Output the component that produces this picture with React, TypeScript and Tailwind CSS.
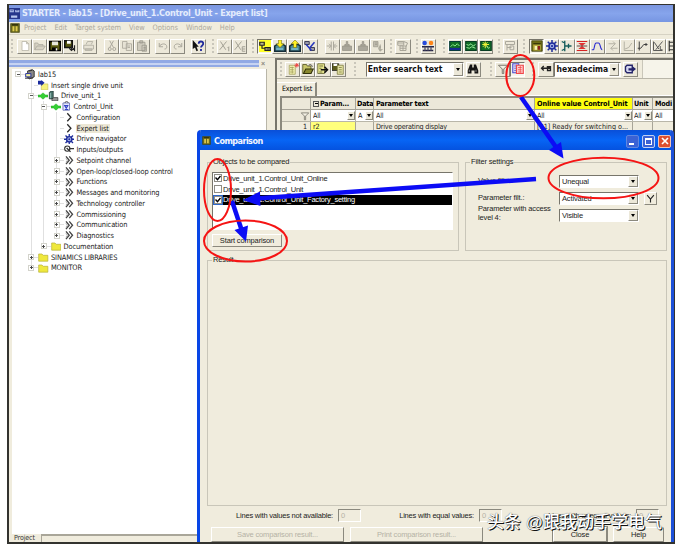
import type { ReactNode } from "react";
import clsx from "clsx";

const tahoma = "font-['DejaVu_Sans_Condensed','DejaVu_Sans',sans-serif]";
const sans = "font-['Liberation_Sans',Arial,sans-serif]";

const glyphs: Record<string, ReactNode> = {
  new: <path d="M4 2h6l3 3v9H4zM10 2v3h3" fill="#fff" stroke="#b4b1a4" />,
  open: <path d="M1 13V4h4l1 2h6v2M1 13l3-5h11l-3 5z" fill="#d5d1c2" stroke="#aaa79b" />,
  save: (
    <>
      <path d="M1 2h14v12H1z" fill="#5b5c12" stroke="#000" strokeWidth="2" />
      <path d="M4 2h8v5H4z" fill="#e8e8da" />
      <path d="M4 10h7v4H4z" fill="#000" />
      <path d="M9 11h2v3H9z" fill="#fff" />
    </>
  ),
  saveCompile: (
    <>
      <path d="M1 1h10v9H1z" fill="#55560f" stroke="#111" strokeWidth="2" />
      <path d="M4 1h5v4H4z" fill="#fff" />
      <path d="M10 7v7M7 11l3 3 3-3M14 7v8" fill="none" stroke="#222" strokeWidth="1.6" />
    </>
  ),
  print: <path d="M4 6l2-4h7l-2 4M1 7h13v5H1zM3 12h9v2H3z" fill="#e6e2d4" stroke="#aaa79b" />,
  cut: <path d="M5 1l5 9M10 1L5 10M3 12a2 2 0 1 0 4 0 2 2 0 1 0-4 0M9 12a2 2 0 1 0 4 0 2 2 0 1 0-4 0" fill="none" stroke="#aaa79b" strokeWidth="1.3" />,
  copy: <path d="M2 2h6v9H2zM7 5h7v9H7zM9 8h3M9 10h3" fill="#e6e2d4" stroke="#a5a296" />,
  paste: <path d="M2 3h10v11H2zM5 1h4v3H5zM8 7h6v8H8zM10 10h3M10 12h3" fill="#cfcbbd" stroke="#9a978b" />,
  undo: <path d="M3 4v5h5M3 9c2-5 10-5 10 0 0 2-1 3-3 3" fill="none" stroke="#aaa79b" strokeWidth="1.3" />,
  redo: <path d="M13 4v5H8M13 9C11 4 3 4 3 9c0 2 1 3 3 3" fill="none" stroke="#aaa79b" strokeWidth="1.3" />,
  help: (
    <>
      <path d="M1 0l8 9H6l2 5-2 1-2-5-3 2z" fill="#111" />
      <path d="M9 5c0-4 6-4 6 0 0 2-3 3-3 5M12 12v2.500" fill="none" stroke="#202a9c" strokeWidth="2.4" />
    </>
  ),
  x1: <path d="M2 2l7 11M10 2L1 13M13 9v6M11.500 10.500l1.500-1.500" fill="none" stroke="#a19e92" strokeWidth="1.3" />,
  x2: <path d="M2 2l7 11M10 2L1 13M11 9h4M11 12h4M11 15h4M11 9v6" fill="none" stroke="#a19e92" strokeWidth="1.3" />,
  connect: (
    <>
      <path d="M0 0h16v16H0z" fill="#ffff28" />
      <path d="M1 3h6v4H1zM8 10h7v4H8z" fill="#bdb98a" stroke="#222" strokeWidth="1.6" />
      <path d="M4 7v4h4M10 12h4" fill="none" stroke="#222" strokeWidth="1.6" />
    </>
  ),
  download: (
    <>
      <path d="M1 8l3-2h8l3 2v7H1z" fill="#4e8a98" stroke="#142b36" strokeWidth="2" />
      <path d="M6 0h4v5h3l-5 5-5-5h3z" fill="#fff022" stroke="#69680a" strokeWidth=".7" />
      <path d="M3 12h9" stroke="#8fd3e2" strokeWidth="1.5" />
    </>
  ),
  upload: (
    <>
      <path d="M1 8l3-2h8l3 2v7H1z" fill="#4e8a98" stroke="#142b36" strokeWidth="2" />
      <path d="M6 10h4V5h3L8 0 3 5h3z" fill="#fff022" stroke="#69680a" strokeWidth=".7" />
      <path d="M3 12h9" stroke="#8fd3e2" strokeWidth="1.5" />
    </>
  ),
  percent: (
    <>
      <path d="M1 2h6v4H1zM8 10h6v4H8z" fill="#9a9aa8" stroke="#3d3d55" strokeWidth="1.3" />
      <path d="M3 6l7 8M14 3L8 10" stroke="#2434bd" strokeWidth="2" />
    </>
  ),
  split: <path d="M7 2v12M10 2v12M1 8h5M11 8h4M4 5l3 3-3 3M13 5l-3 3 3 3" fill="none" stroke="#aaa79b" strokeWidth="1.3" />,
  grayBox: <path d="M2 8h12v6H2zM5 8V6h2V2h2v4h2v2" fill="#aaa79b" stroke="#969387" />,
  grayMove: <path d="M2 2h6v7H2zM4 4h3M4 6h3M8 11h3V6M11 8v6M9 12l2 3 3-3" fill="#bebaac" stroke="#9e9b8f" />,
  table: <path d="M1 2h8v5H1zM4 8h8v6H4zM9 2l5 2-2 5M1 4h8M4 11h8M8 8v6" fill="none" stroke="#a7a497" strokeWidth="1.3" />,
  dots: (
    <>
      <circle cx="3.500" cy="4" r="3" fill="#274bdc" />
      <circle cx="12" cy="4" r="3" fill="#ff8518" />
      <path d="M0 9h16M1 14h14" stroke="#252547" strokeWidth="1.8" />
      <path d="M4 9v5M8 9v5M12 9v5" stroke="#55556b" strokeWidth="1.8" />
    </>
  ),
  trace: (
    <>
      <path d="M1 2h14v12H1z" fill="#117024" stroke="#073d35" strokeWidth="1.6" />
      <path d="M2 9l3-3 3 2 3-3 3 3" fill="none" stroke="#8be88b" strokeWidth="1.3" />
      <path d="M1 12h14" stroke="#162a90" strokeWidth="3" />
    </>
  ),
  trace2: (
    <>
      <path d="M1 2h14v12H1z" fill="#106c25" stroke="#073d22" strokeWidth="1.6" />
      <path d="M2 6l3 1 3-2 3 3 3-2M2 10l4 1 3-2 5 2" fill="none" stroke="#9cec9c" strokeWidth="1.3" />
    </>
  ),
  trace3: (
    <>
      <path d="M1 2h14v12H1z" fill="#117024" stroke="#073d22" strokeWidth="1.6" />
      <path d="M9 8l2 3 2-1" fill="none" stroke="#9cec9c" strokeWidth="1.3" />
      <path d="M7 2v9M3 6h9M4 3l6 6M10 3L4 9" stroke="#f2f23b" strokeWidth="1.3" />
    </>
  ),
  pci: <path d="M2 2h12v4H2zM4 6v8M4 10h6M8 8h5v5H8z" fill="none" stroke="#aaa79b" strokeWidth="1.3" />,
  lock: (
    <>
      <path d="M1 1h14v14H1z" fill="#6f6e17" stroke="#3a3908" />
      <path d="M3 5h10v9H3z" fill="#b8ac3d" />
      <path d="M3 4h10v2H3z" fill="#3a3908" />
      <path d="M5 8h3v5H5z" fill="#f4efb8" />
      <path d="M9 8h3v5H9z" fill="#8b1e1e" />
    </>
  ),
  gear: (
    <>
      <path d="M8 0v16M0 8h16M2.300 2.300l11.400 11.400M13.700 2.300L2.300 13.700" stroke="#1e2c9b" strokeWidth="2" />
      <circle cx="8" cy="8" r="4" fill="#aab6e8" stroke="#1e2c9b" strokeWidth="2.200" />
      <circle cx="8" cy="8" r="1.500" fill="#1e2c9b" />
    </>
  ),
  fork: <path d="M5 1v14M5 4L1 2M5 12l-4 2M5 8h9M10 5v6" fill="none" stroke="#145c5a" strokeWidth="1.800" />,
  limit: (
    <>
      <path d="M1 2h14M1 14h14" stroke="#d62222" strokeWidth="1.600" />
      <path d="M3 4h10L8 8zM3 12h10L8 8z" fill="#e23131" />
      <path d="M1 8h14" stroke="#391818" />
    </>
  ),
  curve: <path d="M1 13h2C5 13 4 4 7 4h3c3 0 2 9 5 9" fill="none" stroke="#2c2cd2" strokeWidth="1.500" />,
  grayArrow: <path d="M2 5h9M8 2l3 3-3 3M5 11h9M8 8l-3 3 3 3" fill="none" stroke="#b4b1a4" strokeWidth="1.300" />,
  grayRamp: <path d="M3 2v12h12M4 12l5-2 4-6" fill="none" stroke="#b4b1a4" strokeWidth="1.300" />,
  ramp: <path d="M3 2v12M1 11h4l4-5h5M12 4v4" fill="none" stroke="#3c3c3c" strokeWidth="1.300" />,
  ramp2: <path d="M2 2v12h12M3 3l6 9M14 2L5 13M11 8v5h3" fill="none" stroke="#4c4c4c" strokeWidth="1.200" />,
  scale: <path d="M3 1v14M3 3h9M3 8h9M3 13h9" fill="none" stroke="#333" strokeWidth="1.600" />,
  newSheet: (
    <>
      <path d="M3 3h8v12H3z" fill="#f1efb0" stroke="#a09e58" />
      <path d="M4 6h5M4 9h5M4 12h5M7 5v9" stroke="#a09e58" />
      <path d="M13 0v6M10 3h6M11 1l4 4M15 1l-4 4" stroke="#ed3e3e" strokeWidth="1.200" />
    </>
  ),
  openSheet: (
    <>
      <path d="M1 2h5l1 2h5v10H1z" fill="#c8c66b" stroke="#4a4919" />
      <path d="M2 14l3-6h10l-3 6z" fill="#8a892f" stroke="#33330c" strokeWidth="1.400" />
      <path d="M9 3c3-2 4 0 5 2" fill="none" stroke="#222" />
    </>
  ),
  exportSheet: (
    <>
      <path d="M1 1h9v13H1z" fill="#e4e38d" stroke="#5a5928" />
      <path d="M3 4h5M3 7h3M3 12h4" stroke="#5a5928" />
      <path d="M5 9h8M10 5l4 4-4 4" fill="none" stroke="#111" strokeWidth="2" />
    </>
  ),
  saveSheet: (
    <>
      <path d="M0 1h9v9H0z" fill="#5b5b1d" stroke="#222" />
      <path d="M2 1h5v3H2z" fill="#fff" />
      <path d="M7 3h8v12H7z" fill="#e4e3a4" stroke="#77763a" />
      <path d="M9 6h4M9 9h4M9 12h4" stroke="#77763a" />
    </>
  ),
  binoculars: (
    <>
      <path d="M4 2h3v4h2V2h3l3 8v4h-5v-4H6v4H1v-4z" fill="#161616" />
      <path d="M3 9v3M12 9v3" stroke="#aaa" />
    </>
  ),
  funnel: <path d="M2 3h12L9 8v6H7V8z" fill="#f4f1e4" stroke="#77756b" strokeWidth="1.300" />,
  funnelBlack: <path d="M2 2l6 7 6-7M8 8v7" fill="none" stroke="#252525" strokeWidth="2" />,
  compare: (
    <>
      <path d="M1 1h8v12H1z" fill="#dadaf7" stroke="#4a4cd0" strokeWidth="1.400" />
      <path d="M3 4h4M3 7h4M3 10h4" stroke="#4a4cd0" />
      <path d="M6 3h9v11H6z" fill="#ffd2d2" stroke="#f0484a" strokeWidth="1.600" />
      <path d="M8 6h5M8 9h5M8 12h5M11 4v9" stroke="#f0484a" />
    </>
  ),
  keyArrow: <path d="M5 4L2 7l3 3M2 7h12M9 5h5v5h-4V7" fill="none" stroke="#222" strokeWidth="1.700" />,
  exit: (
    <>
      <path d="M2 5l2-2h7v10H4l-2-2z" fill="#d4d6ee" stroke="#24246a" strokeWidth="1.800" />
      <path d="M6 7h5V4l5 4-5 4v-2H6z" fill="#24246a" />
    </>
  ),
  host: (
    <>
      <path d="M4 3l7-2 3 2v9l-7 3-3-2z" fill="#888" stroke="#222" strokeWidth="1.300" />
      <path d="M1 7h8v5H1z" fill="#f4f19c" stroke="#25319f" strokeWidth="1.500" />
      <path d="M6 3l5-1M0 14h12" stroke="#333" strokeWidth="1.500" />
    </>
  ),
  insert: (
    <>
      <path d="M5 6h10v9H5z" fill="#f7f27c" stroke="#c9c25a" />
      <path d="M0 1h5V0l5 4-5 5V7H0z" fill="#1a2b9e" />
    </>
  ),
  drive: (
    <>
      <path d="M2 2l3-2h3v12H2z" fill="#48736b" stroke="#1b2a29" />
      <path d="M4 3v8" stroke="#bfe5df" />
      <path d="M9 10h6v5H6v-3z" fill="#999" stroke="#2a2a2a" />
    </>
  ),
  cu: (
    <>
      <path d="M3 3h10v11H3z" fill="#e9ecff" stroke="#7a80b9" strokeWidth="1.500" />
      <path d="M6 3c0-3 5-3 5 0" fill="none" stroke="#555" strokeWidth="1.500" />
      <path d="M5 6l3 5 3-5M6 13h5M6 7h4" fill="none" stroke="#3444c8" strokeWidth="1.700" />
    </>
  ),
  chevron: <path d="M5 2l5.500 6L5 14" fill="none" stroke="#2b2b2b" strokeWidth="2" />,
  chevrons: (
    <>
      <path d="M3 2l5 6-5 6M8 2l5 6-5 6" fill="none" stroke="#444" strokeWidth="2" />
      <path d="M3 5l2 3-2 3" fill="none" stroke="#888" />
    </>
  ),
  io: (
    <>
      <circle cx="5" cy="7" r="4" fill="#fff" stroke="#333" strokeWidth="1.700" />
      <path d="M4 6l6 6M8 7h8" stroke="#333" strokeWidth="2" />
    </>
  ),
  folder: <path d="M1 14V3h5l2 2h7v9z" fill="#efe83d" stroke="#b3ac35" />,
  online: <path d="M0 6.500h4L8 3l4 3.500h4v3h-4L8 13 4 9.500H0z" fill="#35cf35" stroke="#2ab52a" />,
  app: (
    <>
      <path d="M1 1h14v14H1z" fill="#6c6b1c" stroke="#3a3908" />
      <path d="M4 5h3v8H4zM9 5h3v8H9z" fill="#dfcb4e" />
      <path d="M3 2h10v2H3z" fill="#252508" />
    </>
  ),
  starter: (
    <>
      <path d="M0 0h16v16H0z" fill="#26368b" />
      <path d="M1 2h6v4H1zM9 3h6v3H9zM3 11h9v3H3z" fill="#b9c8ee" />
      <path d="M2 4h4M10 4h4" stroke="#26368b" />
    </>
  ),
};

function Glyph({ name, className = "size-3" }: { name: string; className?: string }) {
  return (
    <svg viewBox="0 0 16 16" className={clsx("block shrink-0", className)}>
      {glyphs[name]}
    </svg>
  );
}

function ToolButton({ icon, pressed }: { icon: string; pressed?: boolean }) {
  return (
    <div
      className={clsx(
        "flex h-[15px] w-[15.2px] shrink-0 items-center justify-center border",
        pressed
          ? "border-t-[#77756b] border-l-[#77756b] border-r-white border-b-white bg-[#f7f5ec]"
          : "border-t-white border-l-white border-r-[#8b897e] border-b-[#8b897e] bg-[#ece8d9]"
      )}
    >
      <Glyph name={icon} />
    </div>
  );
}

function Group({ icons, className, pressed = [] }: { icons: string[]; className: string; pressed?: string[] }) {
  return (
    <div className={clsx("flex shrink-0", className)}>
      {icons.map((icon, i) => (
        <ToolButton key={i} icon={icon} pressed={pressed.includes(icon)} />
      ))}
    </div>
  );
}

function Grip({ className }: { className: string }) {
  return <div className={clsx("h-[14px] w-1 shrink-0 border-l-2 border-dotted border-[#c9c6ba]", className)} />;
}

function Arrow({ className }: { className?: string }) {
  return (
    <div className={clsx("flex w-[10px] shrink-0 items-center justify-center border border-t-white border-l-white border-r-[#8b897e] border-b-[#8b897e] bg-[#ece8d9]", className)}>
      <div className="border-x-[2.5px] border-t-[3px] border-x-transparent border-t-black" />
    </div>
  );
}

const tree = [
  { label: "lab15", pl: "pl-[3px]", box: "-", icon: "host" },
  { label: "Insert single drive unit", pl: "pl-[16px]", icon: "insert" },
  { label: "Drive_unit_1", pl: "pl-[16px]", box: "-", online: true, icon: "drive" },
  { label: "Control_Unit", pl: "pl-[28.5px]", box: "-", online: true, icon: "cu" },
  { label: "Configuration", pl: "pl-[41.5px]", icon: "chevron" },
  { label: "Expert list", pl: "pl-[41.5px]", icon: "chevron", selected: true },
  { label: "Drive navigator", pl: "pl-[41.5px]", icon: "gear" },
  { label: "Inputs/outputs", pl: "pl-[41.5px]", icon: "io" },
  { label: "Setpoint channel", pl: "pl-[41.5px]", box: "+", icon: "chevrons" },
  { label: "Open-loop/closed-loop control", pl: "pl-[41.5px]", box: "+", icon: "chevrons" },
  { label: "Functions", pl: "pl-[41.5px]", box: "+", icon: "chevrons" },
  { label: "Messages and monitoring", pl: "pl-[41.5px]", box: "+", icon: "chevrons" },
  { label: "Technology controller", pl: "pl-[41.5px]", box: "+", icon: "chevrons" },
  { label: "Commissioning", pl: "pl-[41.5px]", box: "+", icon: "chevrons" },
  { label: "Communication", pl: "pl-[41.5px]", box: "+", icon: "chevrons" },
  { label: "Diagnostics", pl: "pl-[41.5px]", box: "+", icon: "chevrons" },
  { label: "Documentation", pl: "pl-[28.5px]", box: "+", icon: "folder" },
  { label: "SINAMICS LIBRARIES", pl: "pl-[16px]", box: "+", icon: "folder" },
  { label: "MONITOR", pl: "pl-[16px]", box: "+", icon: "folder" },
];

function Tree() {
  return (
    <div className={clsx("relative flex flex-1 flex-col bg-white text-[7.4px] tracking-[-0.12px] text-[#222]", tahoma)}>
      <div className="absolute top-[10px] left-[18.5px] h-[188px] border-l border-[#e0e0e0]" />
      <div className="absolute top-[32px] left-[31px] h-[145px] border-l border-[#e0e0e0]" />
      <div className="absolute top-[43px] left-[44px] h-[123px] border-l border-[#e0e0e0]" />
      {tree.map((n) => (
        <div key={n.label} className={clsx("relative flex h-[10.75px] shrink-0 items-center", n.pl)}>
          <div
            className={clsx(
              "flex size-[6px] shrink-0 items-center justify-center",
              n.box && "border border-[#d3d3cb] bg-white"
            )}
          >
            {n.box && <div className="h-px w-[3px] bg-[#555]" />}
            {n.box === "+" && <div className="absolute h-[3px] w-px bg-[#444]" />}
          </div>
          <div className="h-px w-[4px] bg-[#e0e0e0]" />
          {n.online && <Glyph name="online" className="size-[10px]" />}
          <Glyph name={n.icon} className="size-[10.5px]" />
          <span className={clsx("ml-[1.5px] px-px leading-[9px] whitespace-nowrap", n.selected && "bg-[#ece7d5]")}>{n.label}</span>
        </div>
      ))}
    </div>
  );
}

function FilterCell({ text, className }: { text: string; className: string }) {
  return (
    <div className={clsx("flex shrink-0 overflow-hidden border-r border-[#b9b6a9] bg-white pl-[2px]", className)}>
      <span className="min-w-0 flex-1 overflow-hidden">{text}</span>
      <Arrow className="my-px w-[8px]!" />
    </div>
  );
}

function ExpertTable() {
  const cell = "shrink-0 overflow-hidden border-r border-[#a7a498] pl-[2px] whitespace-nowrap";
  return (
    <div className={clsx("ml-[3px] border-t-2 border-l-2 border-[#8b897e] text-[7.2px] leading-[11px] tracking-[-0.2px] text-[#222]", tahoma)}>
      <div className="flex h-[12px] border-b border-[#a7a498] bg-[#ece8d9] font-bold text-black">
        <div className={clsx(cell, "w-[29px]")} />
        <div className={clsx(cell, "flex w-[45px] items-center")}>
          <span className="mr-px flex size-[6px] items-center justify-center border border-[#555]">
            <span className="h-px w-[3px] bg-black" />
          </span>
          Param...
        </div>
        <div className={clsx(cell, "w-[18px] pl-px!")}>Data</div>
        <div className={clsx(cell, "w-[161px]")}>Parameter text</div>
        <div className={clsx(cell, "w-[98px] bg-[#ffff10] tracking-[-0.1px]")}>Online value Control_Unit</div>
        <div className={clsx(cell, "w-[20px] pl-px!")}>Unit</div>
        <div className="w-[20px] overflow-hidden pl-[2px]">Modi</div>
      </div>
      <div className="flex h-[12px] border-b border-[#b9b6a9]">
        <div className={clsx(cell, "flex w-[29px] items-center justify-end bg-[#ece8d9]")}>
          <Glyph name="funnel" className="size-[10px]" />
        </div>
        <FilterCell text="All" className="w-[45px]" />
        <FilterCell text="A" className="w-[18px]" />
        <FilterCell text="All" className="w-[161px]" />
        <FilterCell text="All" className="w-[98px]" />
        <FilterCell text="All" className="w-[20px] pl-px!" />
        <div className="flex-1 bg-white pl-[2px]">All</div>
      </div>
      <div className="flex h-[12px] bg-[#f0ecdd] leading-[9.5px]">
        <div className={clsx(cell, "w-[29px] pr-[3px] text-right")}>1</div>
        <div className={clsx(cell, "w-[45px] bg-[#ffff7c]")}>r2</div>
        <div className={clsx(cell, "w-[18px]")} />
        <div className={clsx(cell, "w-[161px]")}>Drive operating display</div>
        <div className={clsx(cell, "w-[98px] tracking-[0px]")}>[31] Ready for switching o...</div>
        <div className={clsx(cell, "w-[20px]")} />
      </div>
    </div>
  );
}

function CheckRow({ label, checked, active }: { label: string; checked?: boolean; active?: boolean }) {
  return (
    <div className={clsx("flex h-[10.8px] items-center", active && "bg-black text-white")}>
      <div className={clsx("flex h-full w-[10px] items-center justify-center", active && "bg-[#2c66c9]")}>
        <div className="size-[8px] border border-[#8f8d84] bg-white">
          {checked && (
            <svg viewBox="0 0 6 6" className="block size-[6px]">
              <path d="M.5 2.500l2 2.200L5.500 1" fill="none" stroke="#000" strokeWidth="1.400" />
            </svg>
          )}
        </div>
      </div>
      <span className="whitespace-nowrap">{label}</span>
    </div>
  );
}

function Combo({ value }: { value: string }) {
  return (
    <div className="flex h-[13px] w-[80px] border border-t-[#77756b] border-l-[#77756b] border-r-white border-b-white bg-white pl-[2px] leading-[12px]">
      <span className="flex-1">{value}</span>
      <Arrow />
    </div>
  );
}

function Fieldset({ title, className, children }: { title: string; className: string; children?: ReactNode }) {
  return (
    <fieldset className={clsx("min-w-0 border border-[#c9c6b9]", className)}>
      <legend className="ml-[4px] h-[10px] px-px leading-[10px] whitespace-nowrap">{title}</legend>
      {children}
    </fieldset>
  );
}

function Count({ label, className }: { label: string; className: string }) {
  return (
    <div className={clsx("flex shrink-0 items-center justify-end", className)}>
      <span className="whitespace-nowrap">{label}</span>
      <div className="ml-[5px] h-[13px] w-[23px] shrink-0 border border-t-[#8b897e] border-l-[#8b897e] border-r-white border-b-white pl-[2px] leading-[12px] text-[#b5b2a5]">0</div>
    </div>
  );
}

function Push({ label, className, disabled }: { label: string; className: string; disabled?: boolean }) {
  return (
    <div
      className={clsx(
        "flex shrink-0 items-center justify-center border border-t-white border-l-white border-r-[#8b897e] border-b-[#8b897e] whitespace-nowrap",
        disabled && "text-[#b5b2a5]",
        className
      )}
    >
      {label}
    </div>
  );
}

function ComparisonDialog() {
  return (
    <div className={clsx("absolute top-[130px] left-[197px] flex h-[412px] w-[477px] flex-col overflow-hidden rounded-t-[4px] border-x-[3px] border-[#0846e6] border-r-[#1c50d8] bg-[#f0ecdd] text-[7.5px] tracking-[-0.15px] text-[#222]", sans)}>
      <div className="flex h-[20px] shrink-0 items-center bg-linear-to-b from-[#0a4fd8] via-[#0765f5] to-[#0552df] pl-[2px]">
        <Glyph name="app" className="h-[11px] w-[9px]" />
        <span className={clsx("ml-[3px] flex-1 pt-[3px] text-[9px] font-bold tracking-[-0.55px] text-[#f1f5ff]", tahoma)}>Comparison</span>
        <div className="flex gap-[3px] pt-[2px]">
          <div className="flex size-[13px] items-end rounded-[2px] border border-[#5f86e0] bg-[#3a62d5] p-[2px]">
            <div className="h-[2px] w-[5px] bg-white" />
          </div>
          <div className="size-[13px] rounded-[2px] border border-[#c0d0f4] bg-[#3a62d5] p-[2px]">
            <div className="size-full border border-t-2 border-white" />
          </div>
          <div className="flex size-[13px] items-center justify-center rounded-[2px] border border-[#f2c3b5] bg-[#de5030]">
            <svg viewBox="0 0 8 8" className="size-[8px]">
              <path d="M1 1l6 6M7 1L1 7" stroke="#fff" strokeWidth="1.700" />
            </svg>
          </div>
        </div>
      </div>

      <div className="mt-[7px] flex h-[94px] shrink-0 pl-[7px]">
        <Fieldset title="Objects to be compared" className="h-[94px] w-[252px]">
          <div className="mt-[5px] ml-[4px] h-[58px] w-[241px] border border-t-[#77756b] border-l-[#77756b] border-r-white border-b-white bg-white tracking-[-0.23px]">
            <CheckRow label="Drive_unit_1.Control_Unit_Online" checked />
            <CheckRow label="Drive_unit_1.Control_Unit" />
            <CheckRow label="Drive_unit_1.Control_Unit_Factory_setting" checked active />
          </div>
          <Push label="Start comparison" className="mt-[4px] ml-[4px] h-[13px] w-[70px]" />
        </Fieldset>
        <Fieldset title="Filter settings" className="ml-[6px] h-[94px] w-[202px]">
          <div className="mt-[8px] grid grid-cols-[81px_80px_auto] gap-y-[4px] pl-[12px]">
            <span className="leading-[12px]">Value filter:</span>
            <Combo value="Unequal" />
            <span />
            <span className="leading-[12px]">Parameter filt.:</span>
            <Combo value="Activated" />
            <div className="ml-[5px] flex size-[13px] items-center justify-center border border-t-white border-l-white border-r-[#8b897e] border-b-[#8b897e]">
              <Glyph name="funnelBlack" className="size-[9px]" />
            </div>
            <span className="-mt-[4px] leading-[8.5px] whitespace-nowrap">Parameter with access<br />level 4:</span>
            <Combo value="Visible" />
          </div>
        </Fieldset>
      </div>

      <Fieldset title="Result" className="mt-[4px] ml-[7px] h-[251px] w-[460px] shrink-0" />

      <div className="mt-[3px] flex h-[13px] shrink-0 tracking-[-0.2px]">
        <Count label="Lines with values not available:" className="w-[161px]" />
        <Count label="Lines with equal values:" className="w-[141px]" />
        <Count label="Lines with unequal values:" className="w-[157px]" />
      </div>
      <div className="mt-[5px] flex h-[15px] shrink-0 pl-[11px]">
        <Push label="Save comparison result..." className="w-[133px]" disabled />
        <Push label="Print comparison result..." className="ml-[6px] w-[133px]" disabled />
        <Push label="Close" className="ml-[70px] w-[54px] outline outline-[#8b897e]" />
        <Push label="Help" className="ml-[6px] w-[51px]" />
      </div>
    </div>
  );
}

function Annotations() {
  return (
    <svg viewBox="0 0 678 546" className="pointer-events-none absolute inset-0 h-[546px] w-[678px]">
      <g stroke="#0c0cf5" strokeWidth="4.500" fill="none">
        <path d="M521 97L558 150" />
        <path d="M536 179L256 198.500" />
        <path d="M232 201L242 231" />
      </g>
      <g fill="#0c0cf5">
        <path d="M563.500 158.500L549 150L561 142Z" />
        <path d="M243 200L260 191.500L260.500 206Z" />
        <path d="M246 241.500L234.500 230L248 225.500Z" />
      </g>
      <g stroke="#f51414" strokeWidth="2" fill="none">
        <ellipse cx="520.3" cy="75.500" rx="14" ry="20.500" />
        <ellipse cx="217.500" cy="190" rx="13.500" ry="31" />
        <ellipse cx="245.500" cy="241" rx="41.500" ry="20.500" />
        <ellipse cx="603.500" cy="178" rx="55" ry="20.300" />
      </g>
    </svg>
  );
}

const menus = ["Project", "Edit", "Target system", "View", "Options", "Window", "Help"];

export default function App() {
  return (
    <div className={clsx("relative h-[546px] w-[678px] overflow-hidden bg-white pt-[4px] pl-[7px]", sans)}>
      <div className="flex h-[540px] w-[668px] flex-col overflow-hidden border-2 border-t border-[#33332f] bg-[#f0ecdd]">
        <div className="flex h-[17px] shrink-0 items-center bg-linear-to-b from-[#7b96df] via-[#86a4ec] to-[#7796e2]">
          <Glyph name="starter" className="size-[11px]" />
          <span className={clsx("ml-[2px] text-[9px] font-bold tracking-[-0.29px] whitespace-nowrap text-[#e4ecfc]", tahoma)}>
            STARTER - lab15 - [Drive_unit_1.Control_Unit - Expert list]
          </span>
        </div>

        <div className={clsx("flex h-[12px] shrink-0 items-center text-[7.4px] text-[#aaa79b]", tahoma)}>
          <Glyph name="app" className="ml-px h-[12px] w-[10px]" />
          <div className="ml-[4px] flex gap-[8px] tracking-[-0.05px] whitespace-nowrap">
            {menus.map((m) => (
              <span key={m}>{m}</span>
            ))}
          </div>
        </div>

        <div className="flex h-[23px] shrink-0 items-center overflow-hidden border-t border-[#d6d2c3]">
          <Grip className="ml-[2px]" />
          <Group className="ml-[2px]" icons={["new", "open", "save", "saveCompile"]} />
          <Group className="ml-[4px]" icons={["print"]} />
          <Group className="ml-[7px]" icons={["cut", "copy", "paste"]} />
          <Group className="ml-[5.5px]" icons={["undo", "redo"]} />
          <Group className="ml-[5.5px]" icons={["help"]} />
          <Grip className="ml-[6px]" />
          <Group className="ml-px" icons={["x1", "x2"]} />
          <Grip className="ml-[4.5px]" />
          <Group className="ml-px" icons={["connect", "download", "upload", "percent"]} pressed={["connect"]} />
          <Group className="ml-[7px]" icons={["split", "grayBox", "grayBox", "grayMove"]} />
          <Grip className="ml-[5px]" />
          <Group className="ml-px" icons={["table"]} />
          <Grip className="ml-[5px]" />
          <Group className="ml-px" icons={["dots"]} />
          <Grip className="ml-[7px]" />
          <Group className="ml-px" icons={["trace", "trace2", "trace3"]} />
          <Grip className="ml-[4.5px]" />
          <Group className="ml-px" icons={["pci"]} />
          <Grip className="ml-[5px]" />
          <Group
            className="ml-[2px]"
            icons={["lock", "gear", "fork", "limit", "curve", "grayArrow", "grayRamp", "ramp", "ramp2", "scale"]}
            pressed={["lock"]}
          />
        </div>

        <div className="flex min-h-0 flex-1 border-t border-[#d0ccbe]">
          <div className="flex w-[258px] shrink-0 flex-col">
            <div className="flex h-[11px] shrink-0 items-center">
              <div className="flex h-[7px] w-[250px] flex-col justify-center bg-[#91a9e4]">
                <div className="h-[2px] bg-[#c6d3f2]" />
              </div>
              <span className="ml-[2px] text-[7px] leading-[8px] font-bold text-[#8b897e]">×</span>
            </div>
            <div className="ml-[3px] flex min-h-0 flex-1 border-r border-[#b9b6a9]">
              <Tree />
            </div>
            <div className="flex h-[8px] shrink-0">
              <span className={clsx("w-[32px] pl-[5px] text-[7px] leading-[9px] tracking-[-0.1px] text-[#333]", tahoma)}>Project</span>
              <div className="h-full flex-1 border-t-2 border-l border-[#a9a699]" />
            </div>
          </div>

          <div className="ml-[8px] flex min-w-0 flex-1 flex-col border-t-2 border-l-2 border-[#77756b]">
            <div className="flex h-[19px] shrink-0 items-center border-b border-[#b9b6a9]">
              <Grip className="ml-[3px]" />
              <Group className="ml-px" icons={["newSheet", "openSheet", "exportSheet", "saveSheet"]} />
              <Grip className="ml-[8px]" />
              <div className="ml-[8px] flex h-[15px] w-[98px] shrink-0 border border-t-[#77756b] border-l-[#77756b] border-r-white border-b-white bg-white">
                <span className={clsx("flex-1 pl-px text-[8.5px] leading-[13px] font-bold whitespace-nowrap text-[#111]", tahoma)}>Enter search text</span>
                <Arrow />
              </div>
              <Group className="ml-[2px]" icons={["binoculars"]} />
              <Grip className="ml-[9px]" />
              <Group className="ml-px" icons={["funnel", "compare"]} pressed={["compare"]} />
              <Grip className="ml-[7px]" />
              <Group className="ml-[2px]" icons={["keyArrow"]} />
              <div className="flex h-[15px] w-[67px] shrink-0 border border-t-[#77756b] border-l-[#77756b] border-r-white border-b-white bg-white">
                <span className={clsx("w-[54px] overflow-hidden pl-[2px] text-[8.5px] leading-[13px] font-bold text-[#111]", tahoma)}>hexadecima:</span>
                <Arrow />
              </div>
              <Group className="ml-[2px]" icons={["exit"]} />
              <div className="ml-[4px] h-full flex-1 border-l border-[#c9c6b9] bg-[#f6f4ea]" />
            </div>
            <div className="flex h-[17px] shrink-0 pt-[3px]">
              <div className={clsx("w-[40px] border-t border-r-2 border-t-white border-r-[#8b897e] pl-[5px] text-[7.2px] leading-[11px] tracking-[-0.25px] whitespace-nowrap", tahoma)}>
                Expert list
              </div>
              <div className="flex-1 border-b border-white" />
            </div>
            <ExpertTable />
          </div>
        </div>
      </div>

      <ComparisonDialog />
      <Annotations />
      <div className="absolute top-[512px] left-[487px] font-['Liberation_Sans','Noto_Sans_CJK_SC',sans-serif] text-[17px] leading-[22px] font-medium whitespace-nowrap text-white [text-shadow:1px_1px_0_#111,0_0_1px_#333]">
        头条 @跟我动手学电气
      </div>
    </div>
  );
}
